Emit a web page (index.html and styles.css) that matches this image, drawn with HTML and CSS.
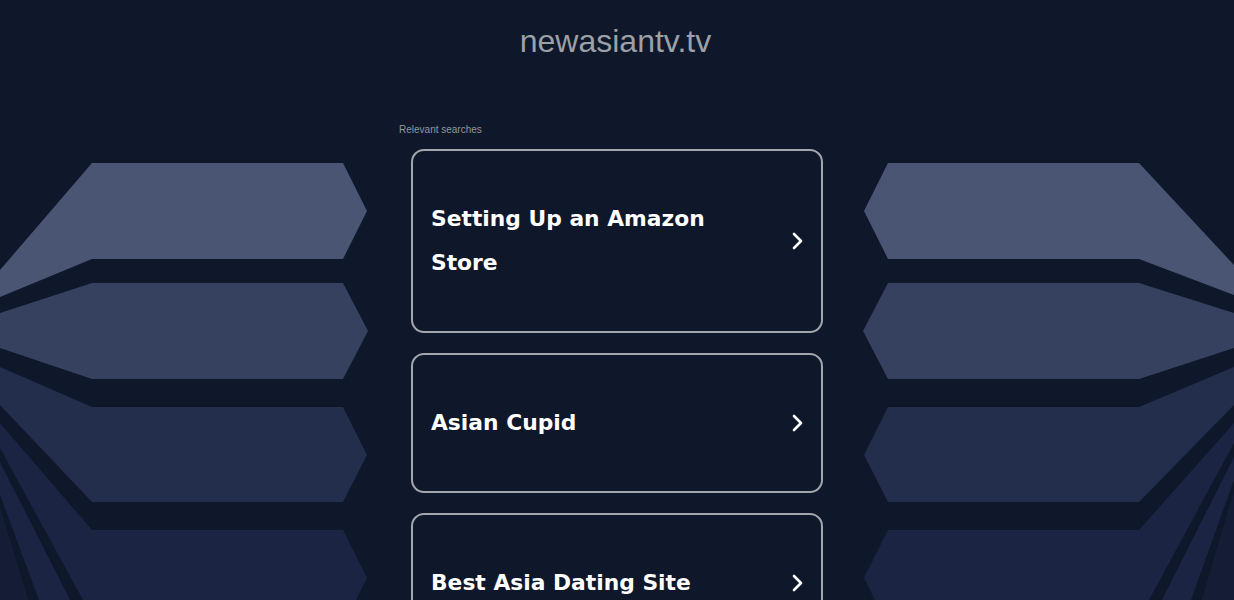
FILE: index.html
```html
<!DOCTYPE html>
<html lang="en">
<head>
<meta charset="utf-8">
<title>newasiantv.tv</title>
<link rel="stylesheet" href="styles.css">
</head>
<body>
<div class="backdrop" aria-hidden="true">
  <svg class="deco deco-left" width="380" height="600" viewBox="0 0 380 600">
    <path fill="#4a5574" d="M92,163 L343,163 L367,211 L343,259 L92,259 L0,297 L0,270 Z"/>
    <path fill="#36415f" d="M0,313 L92,283 L343,283 L368,331 L343,379 L92,379 L0,348 Z"/>
    <path fill="#232e4d" d="M0,367 L92,407 L343,407 L367,455 L343,502 L92,502 L0,405 Z"/>
    <path fill="#1b2442" d="M0,423 L92,530 L343,530 L367,578 L356,600 L0,600 Z"/>
    <path fill="#0f172a" d="M0,448 L0,462 L70,600 L83,600 Z"/>
    <path fill="#0f172a" d="M0,495 L0,508 L28,600 L39,600 Z"/>
    <path fill="#141c36" d="M0,508 L28,600 L0,600 Z"/>
  </svg>
  <svg class="deco deco-right" width="383" height="600" viewBox="0 0 383 600">
    <path fill="#4a5574" d="M95,163 L346,163 L370,211 L346,259 L95,259 L0,295 L0,265 Z"/>
    <path fill="#36415f" d="M0,313 L95,283 L346,283 L371,331 L346,379 L95,379 L0,348 Z"/>
    <path fill="#232e4d" d="M0,367 L95,407 L346,407 L370,455 L346,502 L95,502 L0,405 Z"/>
    <path fill="#1b2442" d="M0,423 L95,530 L346,530 L370,578 L359,600 L0,600 Z"/>
    <path fill="#0f172a" d="M0,443 L0,457 L72,600 L85,600 Z"/>
    <path fill="#0f172a" d="M0,480 L0,492 L32,600 L43,600 Z"/>
    <path fill="#141c36" d="M0,492 L32,600 L0,600 Z"/>
  </svg>
</div>
<main class="page">
  <header class="domain">newasiantv.tv</header>
  <section class="related">
    <p class="label">Relevant searches</p>
    <ul class="list">
      <li>
        <a class="card" href="#">
          <span class="card-text">Setting Up an Amazon Store</span>
          <svg class="chev" width="12" height="18" viewBox="0 0 12 18"><polyline points="3,2 10,9 3,16" fill="none" stroke="#ffffff" stroke-width="2.6" stroke-linecap="round" stroke-linejoin="round"/></svg>
        </a>
      </li>
      <li>
        <a class="card" href="#">
          <span class="card-text">Asian Cupid</span>
          <svg class="chev" width="12" height="18" viewBox="0 0 12 18"><polyline points="3,2 10,9 3,16" fill="none" stroke="#ffffff" stroke-width="2.6" stroke-linecap="round" stroke-linejoin="round"/></svg>
        </a>
      </li>
      <li>
        <a class="card" href="#">
          <span class="card-text">Best Asia Dating Site</span>
          <svg class="chev" width="12" height="18" viewBox="0 0 12 18"><polyline points="3,2 10,9 3,16" fill="none" stroke="#ffffff" stroke-width="2.6" stroke-linecap="round" stroke-linejoin="round"/></svg>
        </a>
      </li>
    </ul>
  </section>
</main>
</body>
</html>
```
FILE: styles.css
```css
html, body {
  margin: 0;
  padding: 0;
  background: #0f172a;
  height: 100%;
  overflow: hidden;
}

body {
  position: relative;
  font-family: "Liberation Sans", Arial, sans-serif;
}

.backdrop {
  position: absolute;
  inset: 0;
  z-index: 0;
  pointer-events: none;
}

.deco {
  position: absolute;
  top: 0;
  display: block;
}

.deco-left {
  left: 0;
}

.deco-right {
  right: 0;
  transform: scaleX(-1);
}

.page {
  position: relative;
  z-index: 1;
  display: flex;
  flex-direction: column;
  align-items: center;
  padding-top: 23px;
}

.domain {
  font-family: "Liberation Sans", Arial, sans-serif;
  font-size: 32px;
  line-height: 36px;
  color: #9ca0a7;
  text-align: center;
  margin-left: -3px;
}

.related {
  width: 436px;
  margin-top: 65px;
}

.label {
  margin: 0 0 13px 0;
  font-size: 10px;
  line-height: 12px;
  color: #9296a0;
}

.list {
  list-style: none;
  margin: 0;
  padding: 0 12px;
  display: flex;
  flex-direction: column;
  gap: 20px;
}

.card {
  display: flex;
  align-items: center;
  justify-content: space-between;
  gap: 20px;
  padding: 46px 18px 46px 18px;
  border: 2px solid #a3a6ac;
  border-radius: 13px;
  text-decoration: none;
  color: #ffffff;
  background: #0f172a;
}

.card-text {
  flex: 1;
  max-width: 330px;
  font-family: "DejaVu Sans", Verdana, sans-serif;
  font-weight: bold;
  font-size: 21.8px;
  line-height: 44px;
}

.chev {
  flex: none;
  display: block;
}
```
